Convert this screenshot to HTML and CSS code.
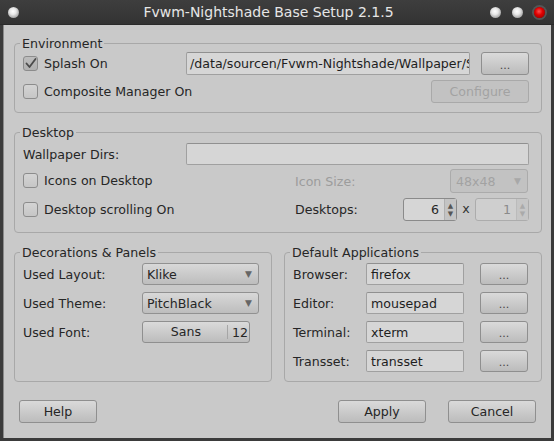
FILE: index.html
```html
<!DOCTYPE html>
<html>
<head>
<meta charset="utf-8">
<link rel="stylesheet" href="styles.css">
</head>
<body>
<div class="window">
  <div class="titlebar">
    <div class="title">Fvwm-Nightshade Base Setup 2.1.5</div>
    <span class="orb orb-left"></span>
    <div class="orbs">
      <span class="orb"></span>
      <span class="orb"></span>
      <span class="orb red"></span>
    </div>
  </div>
  <div class="client">
    <fieldset class="group env">
      <legend>Environment</legend>
      <div class="row r1">
        <label class="check lbl-col"><span class="box checked"><svg viewBox="0 0 15 15" width="15" height="15"><path d="M3.5 7.5 L6.5 11 L12.5 3" fill="none" stroke="#4a4a4a" stroke-width="1.8" stroke-linejoin="round" stroke-linecap="round"/></svg></span>Splash On</label>
        <div class="input path">/data/sourcen/Fvwm-Nightshade/Wallpaper/S</div>
        <div class="btn dots">...</div>
      </div>
      <div class="row r2">
        <label class="check"><span class="box"></span>Composite Manager On</label>
        <div class="spacer"></div>
        <div class="btn configure disabled">Configure</div>
      </div>
    </fieldset>

    <fieldset class="group desk">
      <legend>Desktop</legend>
      <div class="row d1">
        <span class="lbl lbl-col">Wallpaper Dirs:</span>
        <div class="input wide"></div>
      </div>
      <div class="row d2">
        <label class="check lbl-col2"><span class="box"></span>Icons on Desktop</label>
        <span class="lbl disabled-text grow">Icon Size:</span>
        <div class="combo size disabled"><span class="ctext">48x48</span><span class="arrow">&#9660;</span></div>
      </div>
      <div class="row d3">
        <label class="check lbl-col2"><span class="box"></span>Desktop scrolling On</label>
        <span class="lbl grow">Desktops:</span>
        <div class="spin"><span class="sval">6</span><span class="sarrows"><i>&#9650;</i><i>&#9660;</i></span></div>
        <span class="times">x</span>
        <div class="spin disabled"><span class="sval">1</span><span class="sarrows"><i>&#9650;</i><i>&#9660;</i></span></div>
      </div>
    </fieldset>

    <div class="lower">
      <fieldset class="group deco">
        <legend>Decorations &amp; Panels</legend>
        <div class="row p">
          <span class="lbl dlab">Used Layout:</span>
          <div class="combo layout"><span class="ctext">Klike</span><span class="arrow">&#9660;</span></div>
        </div>
        <div class="row p">
          <span class="lbl dlab">Used Theme:</span>
          <div class="combo layout"><span class="ctext">PitchBlack</span><span class="arrow">&#9660;</span></div>
        </div>
        <div class="row p">
          <span class="lbl dlab">Used Font:</span>
          <div class="btn fontbtn"><span class="fname">Sans</span><span class="fsize">12</span></div>
        </div>
      </fieldset>

      <fieldset class="group apps">
        <legend>Default Applications</legend>
        <div class="row p">
          <span class="lbl alab">Browser:</span>
          <div class="input app">firefox</div>
          <div class="btn dots">...</div>
        </div>
        <div class="row p">
          <span class="lbl alab">Editor:</span>
          <div class="input app">mousepad</div>
          <div class="btn dots">...</div>
        </div>
        <div class="row p">
          <span class="lbl alab">Terminal:</span>
          <div class="input app">xterm</div>
          <div class="btn dots">...</div>
        </div>
        <div class="row p">
          <span class="lbl alab">Transset:</span>
          <div class="input app">transset</div>
          <div class="btn dots">...</div>
        </div>
      </fieldset>
    </div>

    <div class="buttons">
      <div class="btn help">Help</div>
      <div class="spacer"></div>
      <div class="btn action">Apply</div>
      <div class="btn action">Cancel</div>
    </div>
  </div>
</div>
</body>
</html>
```

FILE: styles.css
```css
* { box-sizing: border-box; }
html, body { margin: 0; padding: 0; }
body {
  width: 554px;
  height: 441px;
  overflow: hidden;
  font-family: "DejaVu Sans", sans-serif;
  font-size: 12.6px;
  color: #262626;
  background: #3a3a3a;
}
.window {
  width: 554px;
  height: 441px;
  display: flex;
  flex-direction: column;
  background: #3b3b3b;
}
.titlebar {
  height: 25px;
  flex: none;
  display: flex;
  align-items: center;
  position: relative;
  background: linear-gradient(#3e3e3e, #333333);
  border-bottom: 1px solid #2a2a2a;
}
.title {
  position: absolute;
  left: 0; right: 17px; top: 4px;
  text-align: center;
  color: #e6e6e6;
  font-size: 14px;
  line-height: 16px;
}
.orb {
  width: 11px; height: 11px;
  border-radius: 50%;
  display: inline-block;
  background: radial-gradient(circle at 45% 40%, #ffffff 0%, #e8e8e8 35%, #9a9a9a 80%, #555 100%);
}
.orb-left { margin-left: 8px; }
.orbs {
  margin-left: auto;
  margin-right: 9px;
  display: flex;
  gap: 11px;
}
.orb.red {
  background: radial-gradient(circle at 45% 40%, #ff5050 0%, #e00000 40%, #900 85%, #400 100%);
  box-shadow: 0 0 0 2px #555;
}
.client {
  flex: 1;
  margin: 0 3px 3px 3px;
  background: #c9c9c9;
  border-left: 1px solid #8a8a8a;
  padding: 11px 9px 0 10px;
  display: flex;
  flex-direction: column;
}
.group {
  margin: 0;
  border: 1px solid #a8a8a8;
  border-radius: 4px;
  min-width: 0;
}
legend {
  padding: 0 2px;
  margin-left: -3px;
  line-height: 15px;
  color: #262626;
}
.env { padding: 1px 12px 9px 8px; }
.desk { margin-top: 12px; padding: 3px 12px 11px 8px; }
.row {
  display: flex;
  align-items: center;
}
.r1 { height: 23px; }
.r2 { height: 23px; margin-top: 5px; }
.d1 { height: 22px; }
.d2 { height: 24px; margin-top: 4px; }
.d3 { height: 23px; margin-top: 5px; }
.lbl-col { width: 163px; flex: none; }
.lbl-col2 { width: 272px; flex: none; }
.grow { flex: 1; }
.spacer { flex: 1; }
.check {
  display: flex;
  align-items: center;
  gap: 6px;
  white-space: nowrap;
}
.d2 .check { margin-bottom: 2px; }
.box {
  width: 15px; height: 15px;
  flex: none;
  border: 1px solid #8c8c8c;
  border-radius: 3px;
  background: linear-gradient(#d4d4d4, #c6c6c6);
  display: inline-block;
  position: relative;
}
.box svg { position: absolute; left: -1px; top: -1px; }
.box.checked { background: linear-gradient(#bdbdbd, #b0b0b0); }
.input {
  height: 100%;
  border: 1px solid #a0a0a0;
  border-top-color: #909090;
  border-radius: 2px;
  background: #d6d6d6;
  padding: 0 4px;
  line-height: 21px;
  white-space: nowrap;
  overflow: hidden;
  color: #1e1e1e;
}
.path { width: 284px; flex: none; padding-left: 3px; }
.wide { flex: 1; }
.btn {
  border: 1px solid #8f8f8f;
  border-radius: 3px;
  background: linear-gradient(#dadada, #bcbcbc);
  display: flex;
  align-items: center;
  justify-content: center;
  color: #262626;
  height: 23px;
  white-space: nowrap;
}
.dots { width: 48px; margin-left: auto; flex: none; font-size: 11px; padding-top: 3px; color: #444; }
.env .dots { margin-left: 11px; height: 23px; }
.configure { width: 98px; }
.btn.disabled {
  color: #a2a2a2;
  background: #c2c2c2;
  border-color: #a9a9a9;
}
.lbl { white-space: nowrap; }
.disabled-text { color: #9c9c9c; }
.combo {
  height: 100%;
  border: 1px solid #919191;
  border-radius: 3px;
  background: linear-gradient(#d8d8d8, #bdbdbd);
  display: flex;
  align-items: center;
  padding: 0 6px 0 5px;
}
.combo .ctext { flex: 1; }
.combo .arrow { font-size: 9px; color: #666; }
.combo.disabled { background: #c2c2c2; border-color: #ababab; color: #a2a2a2; }
.combo.disabled .arrow { color: #a8a8a8; }
.size { width: 78px; flex: none; margin-right: 1px; }
.spin {
  height: 100%;
  width: 54px;
  flex: none;
  border: 1px solid #8a8a8a;
  border-radius: 3px;
  background: #d6d6d6;
  display: flex;
}
.spin .sval {
  flex: 1;
  text-align: right;
  padding-right: 5px;
  line-height: 21px;
}
.sarrows {
  width: 12px;
  border-left: 1px solid #b0b0b0;
  background: #c4c4c4;
  display: flex;
  flex-direction: column;
  justify-content: center;
  align-items: center;
  font-style: normal;
}
.sarrows i { font-style: normal; font-size: 7px; line-height: 8px; color: #555; }
.spin.disabled { border-color: #acacac; background: #cfcfcf; color: #8a8a8a; }
.spin.disabled .sarrows { background: #c6c6c6; border-left-color: #bbbbbb; }
.spin.disabled .sarrows i { color: #aaa; }
.times { width: 18px; text-align: center; color: #333; padding-bottom: 2px; }
.lower {
  margin-top: 12px;
  display: flex;
  gap: 12px;
}
.deco { width: 258px; padding: 3px 12px 0 8px; height: 137px; }
.apps { flex: 1; padding: 3px 13px 0 8px; height: 137px; }
.p { height: 22px; margin-bottom: 7px; flex: none; }
.dlab { width: 119px; flex: none; }
.layout { width: 117px; flex: none; padding-left: 4px; }
.fontbtn { width: 108px; height: 22px; padding: 0; justify-content: flex-start; }
.fname { width: 85px; text-align: center; border-right: 1px solid #a6a6a6; line-height: 14px; padding-left: 2px; }
.fsize { flex: 1; text-align: right; padding-right: 1px; }
.alab { width: 73px; flex: none; }
.app { width: 98px; flex: none; }
.apps .dots { height: 22px; }
.buttons {
  display: flex;
  margin-top: 18px;
  padding: 0 6px 0 5px;
  gap: 22px;
}
.help { width: 78px; }
.action { width: 88px; }
```
